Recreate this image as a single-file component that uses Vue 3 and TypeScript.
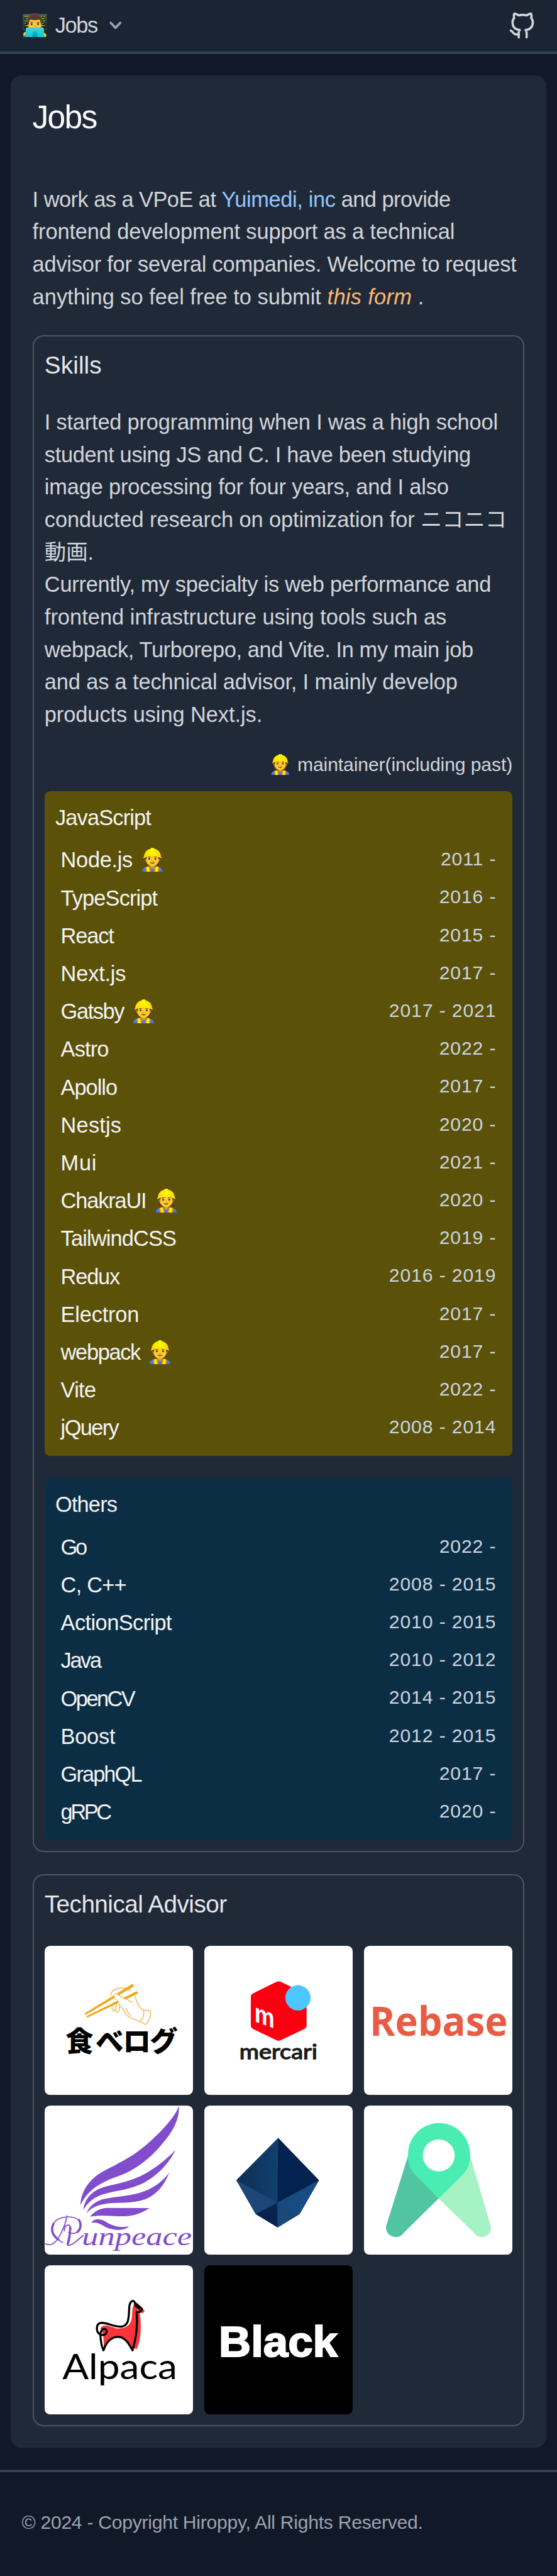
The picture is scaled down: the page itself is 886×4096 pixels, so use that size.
<script setup lang="ts">
interface Line {
  text: string
  tracking: number
}

interface Skill {
  name: string
  years: string
  tracking: number
  maintainer?: boolean
}

interface SkillGroup {
  title: string
  kind: 'javascript' | 'others'
  skills: Skill[]
}

const biography: Line[] = [
  { text: 'I started programming when I was a high school', tracking: -0.0058 },
  { text: 'student using JS and C. I have been studying', tracking: -0.0093 },
  { text: 'image processing for four years, and I also', tracking: -0.0047 },
  { text: 'conducted research on optimization for ニコニコ', tracking: -0.003 },
  { text: '動画.', tracking: 0 },
  { text: 'Currently, my specialty is web performance and', tracking: -0.0073 },
  { text: 'frontend infrastructure using tools such as', tracking: 0.0007 },
  { text: 'webpack, Turborepo, and Vite. In my main job', tracking: -0.0113 },
  { text: 'and as a technical advisor, I mainly develop', tracking: -0.0042 },
  { text: 'products using Next.js.', tracking: -0.002 },
]

const groups: SkillGroup[] = [
  {
    title: 'JavaScript',
    kind: 'javascript',
    skills: [
      { name: 'Node.js', years: '2011 -', tracking: -0.01, maintainer: true },
      { name: 'TypeScript', years: '2016 -', tracking: -0.026 },
      { name: 'React', years: '2015 -', tracking: -0.034 },
      { name: 'Next.js', years: '2017 -', tracking: -0.006 },
      { name: 'Gatsby', years: '2017 - 2021', tracking: -0.041, maintainer: true },
      { name: 'Astro', years: '2022 -', tracking: -0.025 },
      { name: 'Apollo', years: '2017 -', tracking: -0.03 },
      { name: 'Nestjs', years: '2020 -', tracking: 0.005 },
      { name: 'Mui', years: '2021 -', tracking: 0.02 },
      { name: 'ChakraUI', years: '2020 -', tracking: -0.034, maintainer: true },
      { name: 'TailwindCSS', years: '2019 -', tracking: -0.025 },
      { name: 'Redux', years: '2016 - 2019', tracking: -0.035 },
      { name: 'Electron', years: '2017 -', tracking: -0.006 },
      { name: 'webpack', years: '2017 -', tracking: -0.039, maintainer: true },
      { name: 'Vite', years: '2022 -', tracking: -0.021 },
      { name: 'jQuery', years: '2008 - 2014', tracking: -0.047 },
    ],
  },
  {
    title: 'Others',
    kind: 'others',
    skills: [
      { name: 'Go', years: '2022 -', tracking: -0.1 },
      { name: 'C, C++', years: '2008 - 2015', tracking: -0.023 },
      { name: 'ActionScript', years: '2010 - 2015', tracking: -0.017 },
      { name: 'Java', years: '2010 - 2012', tracking: -0.07 },
      { name: 'OpenCV', years: '2014 - 2015', tracking: -0.074 },
      { name: 'Boost', years: '2012 - 2015', tracking: -0.008 },
      { name: 'GraphQL', years: '2017 -', tracking: -0.056 },
      { name: 'gRPC', years: '2020 -', tracking: -0.1 },
    ],
  },
]

const track = (value: number) => ({ letterSpacing: `${value}em` })
</script>

<template>
  <div class="page">
    <header class="header">
      <div class="menu">
        <span class="menu-emoji">👨‍💻</span>
        <span class="menu-label">Jobs</span>
        <svg class="chevron" viewBox="0 0 10 7" fill="none">
          <path d="M1.5 1.5 5 5.2 8.5 1.5" stroke="#9ca3af" stroke-width="1.7" stroke-linecap="round" stroke-linejoin="round" />
        </svg>
      </div>
      <svg class="github" viewBox="0 0 24 24" fill="none" stroke="#d1d5db" stroke-width="2" stroke-linecap="round" stroke-linejoin="round">
        <path d="M9 19c-5 1.5-5-2.5-7-3m14 6v-3.87a3.37 3.37 0 0 0-.94-2.61c3.14-.35 6.44-1.54 6.44-7A5.44 5.44 0 0 0 20 4.77 5.07 5.07 0 0 0 19.91 1S18.73.65 16 2.48a13.38 13.38 0 0 0-7 0C6.27.65 5.09 1 5.09 1A5.07 5.07 0 0 0 5 4.77a5.44 5.44 0 0 0-1.5 3.78c0 5.42 3.3 6.61 6.44 7A3.37 3.37 0 0 0 9 18.13V22" />
      </svg>
    </header>

    <main class="card">
      <h1 class="title">Jobs</h1>
      <p class="intro">
        <span class="line" :style="track(-0.0155)">I work as a VPoE at <a class="company">Yuimedi, inc</a> and provide</span>
        <span class="line" :style="track(-0.0035)">frontend development support as a technical</span>
        <span class="line" :style="track(-0.0067)">advisor for several companies. Welcome to request</span>
        <span class="line" :style="track(0.0005)">anything so feel free to submit <a class="form-link">this form</a> .</span>
      </p>

      <section class="panel">
        <h2 class="panel-title">Skills</h2>
        <p class="biography">
          <span v-for="line in biography" :key="line.text" class="line" :style="track(line.tracking)">{{ line.text }}</span>
        </p>
        <p class="legend"><span class="legend-emoji">👷</span> maintainer(including past)</p>

        <div class="groups">
          <div v-for="group in groups" :key="group.title" class="group" :class="group.kind">
            <h3 class="group-title">{{ group.title }}</h3>
            <ul class="skills">
              <li v-for="skill in group.skills" :key="skill.name" class="skill">
                <span class="skill-name">
                  <span :style="track(skill.tracking)">{{ skill.name }}</span>
                  <span v-if="skill.maintainer" class="badge">👷</span>
                </span>
                <span class="years">{{ skill.years }}</span>
              </li>
            </ul>
          </div>
        </div>
      </section>

      <section class="panel">
        <h2 class="panel-title advisor-title">Technical Advisor</h2>
        <div class="companies">
          <!-- Tabelog -->
          <svg class="tile" viewBox="81 473 865 865">
            <g fill="none" stroke="#e9ae3c" stroke-width="4.5" stroke-linejoin="round" stroke-linecap="round">
              <path d="M464 760C470 728 505 714 545 718L580 734M606 764C615 800 634 842 657 846L697 852C700 880 687 916 667 930L628 910C600 898 573 894 556 874C537 842 530 824 510 812M657 846C662 874 650 900 638 912M580 878C560 858 553 830 540 810" />
              <path d="M486 800C466 826 471 850 483 851C494 852 493 828 500 808M500 808C488 846 495 859 504 858C516 855 516 835 518 820M545 773L573 793Q585 802 592 795" />
            </g>
            <path d="M592 693 602 708 319 875 313 866ZM617 736 625 750 329 891 323 882Z" fill="#efa91b" />
            <path d="M482 760C487 748 498 750 512 760L572 794 552 835 505 793Z" fill="#fff" />
            <path d="M482 760C487 748 498 750 512 760L550 783M482 760Q485 780 508 796" fill="none" stroke="#e9ae3c" stroke-width="4" />
            <text class="tabelog" x="203 378 536 692" y="1087">食べログ</text>
          </svg>

          <!-- Mercari -->
          <svg class="tile" viewBox="0 0 288 288">
            <path d="M139.500 69.800Q143.800 67.500 148 69.800L193.500 92Q198 94.500 198 99V154Q198 158.500 193.500 161L148 182.500Q143.800 185 139.500 182.500L94.500 161Q90 158.500 90 154V99Q90 94.500 94.500 92Z" fill="#fb0010" />
            <circle cx="181.300" cy="100.600" r="24.400" fill="#4dc7ff" />
            <g transform="translate(97 146) skewY(20)">
              <text class="mercari-mark" x="0" y="0" textLength="39" lengthAdjust="spacingAndGlyphs">m</text>
            </g>
            <text class="mercari" x="68" y="218.500" textLength="151" lengthAdjust="spacingAndGlyphs">mercari</text>
          </svg>

          <!-- Rebase -->
          <svg class="tile" viewBox="0 0 288 288">
            <text class="rebase" x="11" y="174" textLength="267" lengthAdjust="spacingAndGlyphs">Rebase</text>
          </svg>

          <!-- Runpeace -->
          <svg class="tile" viewBox="21 22 865 865">
            <g fill="#824dcd">
              <path d="M801 22C808 110 755 190 690 262C630 330 560 385 480 420C390 455 290 480 229 600C233 520 280 450 360 405C450 358 520 325 590 268C690 185 785 85 801 22Z" />
              <path d="M782 280C755 340 690 420 600 470C520 512 440 515 370 535C310 553 275 580 246 629C254 560 300 520 350 501C410 480 480 475 560 440C640 405 725 340 782 280Z" />
              <path d="M746 410C725 465 690 525 620 560C540 595 450 582 380 592C325 600 290 615 264 650C280 605 320 575 370 564C440 549 520 550 600 520C660 497 710 460 746 410Z" />
              <path d="M284 668C310 640 335 618 390 617L631 618C595 640 550 664 490 665C420 667 345 654 284 668Z" />
              <path d="M293 704C310 675 345 680 375 696C415 721 450 734 512 725C485 750 430 750 385 732C350 716 330 694 293 704Z" />
            </g>
            <g fill="none" stroke="#824dcd" stroke-linecap="round">
              <path d="M26 825C60 842 90 815 112 772C130 735 148 700 150 662M126 818C65 785 45 740 80 697C115 660 215 655 230 710C236 760 185 775 160 758" stroke-width="6" />
              <path d="M136 750C130 715 175 700 172 740C168 780 150 810 155 834C190 835 205 805 245 778" stroke-width="7" />
              <path d="M72 710C54 745 70 780 100 800M222 688C236 715 230 742 212 756M170 730Q168 790 156 825" stroke-width="13" />
            </g>
            <text class="runpeace" x="238" y="832" textLength="638" lengthAdjust="spacingAndGlyphs">unpeace</text>
          </svg>

          <!-- Crystal -->
          <svg class="tile" viewBox="0 0 288 288">
            <defs>
              <linearGradient id="crystal-left" x1="0" y1="0" x2="1" y2="0">
                <stop offset="0" stop-color="#0d2f50" />
                <stop offset="1" stop-color="#123f71" />
              </linearGradient>
            </defs>
            <path d="M143 62.700 62 144.400 99.400 210 142 235.700 184.500 210 222 144.400Z" fill="#19457a" />
            <path d="M143 62.700 62 144.400 141.500 188Z" fill="url(#crystal-left)" />
            <path d="M143 62.700 222 144.400 141.500 188Z" fill="#04224f" />
            <path d="M62 144.400 99.400 210 141.500 188Z" fill="#1c4776" />
            <path d="M222 144.400 184.500 210 141.500 188Z" fill="#194b83" />
            <path d="M99.400 210 142 235.700 141.500 188Z" fill="#07244f" />
            <path d="M184.500 210 142 235.700 141.500 188Z" fill="#1a4877" />
          </svg>

          <!-- Map pin -->
          <svg class="tile" viewBox="0 0 288 288">
            <path d="M85 98 43.200 232C38 252 66 263 77 246L144.400 179.700Z" fill="#51c5a2" />
            <path d="M205.600 98 245 232C250 252 224 263 213 246L144.400 179.700Z" fill="#a5f2c5" />
            <path d="M145.300 33.700C112 33.700 85 61 85 96C85 112 90 124 99 134L144.400 179.700 191 134C200 124 205.600 112 205.600 96C205.600 61 178.600 33.700 145.300 33.700Z" fill="#49edb4" />
            <circle cx="144.700" cy="96.400" r="30.900" fill="#fff" />
          </svg>

          <!-- Alpaca -->
          <svg class="tile" viewBox="21 21 865 865">
            <path d="M345 388C360 360 390 372 440 388C500 390 525 365 528 320L532 270Q540 240 557 236L577 258 601 283Q604 300 574 298C585 370 582 450 557 508L530 500C510 455 470 435 440 438C400 445 380 480 366 500L362 425Z" fill="#fd333c" />
            <path d="M544 235C535 218 515 232 513 265C509 320 514 370 470 377C420 382 385 350 345 356C315 366 320 415 348 424C375 434 393 405 375 392C350 382 342 425 345 425C347 460 350 490 363 515C375 480 400 438 447 436C490 438 510 475 532 515C555 440 563 370 556 292C570 296 590 285 585 272C570 260 558 248 547 245Z" fill="none" stroke="#000" stroke-width="12" stroke-linejoin="round" />
            <path d="M545 246 586 268 570 280Q555 268 541 258Z" fill="#000" />
            <text class="alpaca" x="124" y="684" textLength="668" lengthAdjust="spacingAndGlyphs">Alpaca</text>
          </svg>

          <!-- Black -->
          <svg class="tile dark" viewBox="0 0 288 288">
            <text class="black" x="28" y="176" textLength="230" lengthAdjust="spacingAndGlyphs">Black</text>
          </svg>
        </div>
      </section>
    </main>

    <footer class="footer">© 2024 - Copyright Hiroppy, All Rights Reserved.</footer>
  </div>
</template>

<style>
html {
  font-size: 21.5049px;
  background: #111827;
}
</style>

<style scoped>
.page {
  box-sizing: border-box;
  height: 4096px;
  overflow: hidden;
  background: #111827;
  color: #d1d5db;
  font-family: 'Liberation Sans', 'Noto Sans CJK JP', 'Noto Color Emoji', sans-serif;
  font-size: 1.6rem;
  line-height: 2.4rem;
}

h1,
h2,
h3,
p,
ul {
  margin: 0;
  padding: 0;
  font-weight: 400;
  list-style: none;
}

.header {
  box-sizing: border-box;
  display: flex;
  align-items: center;
  justify-content: space-between;
  height: 4rem;
  padding: 0 1.6rem;
  border-bottom: 0.2rem solid #334155;
  background: #1b2432;
}

.menu {
  display: flex;
  align-items: center;
}

.menu-emoji {
  width: 2.48rem;
  white-space: nowrap;
}

.menu-label {
  width: 3.98rem;
  letter-spacing: -0.04em;
}

.chevron {
  width: 1rem;
  height: 0.7rem;
}

.github {
  width: 2rem;
  height: 2rem;
}

.card {
  margin: 1.6rem 0.8rem;
  padding: 1.6rem;
  border-radius: 0.8rem;
  background: #202937;
}

.title {
  margin-bottom: 3.47rem;
  color: #f9fafb;
  font-size: 2.4rem;
  line-height: 2.9rem;
  letter-spacing: -0.035em;
}

.line {
  display: block;
  height: 2.4rem;
  white-space: pre;
}

.company {
  color: #93c5fd;
  letter-spacing: -0.0105em;
}

.form-link {
  color: #fdba74;
  font-style: italic;
  letter-spacing: 0.009em;
}

.panel {
  margin-top: 1.6rem;
  padding: 0.75rem 0.8rem 0.8rem;
  border: 0.1rem solid #4b5563;
  border-radius: 0.8rem;
}

.panel-title {
  color: #e5e7eb;
  font-size: 1.8rem;
  line-height: 2.8rem;
  letter-spacing: 0.003em;
}

.advisor-title {
  letter-spacing: -0.014em;
}

.biography {
  margin-top: 1.64rem;
}

.legend {
  margin-top: 1.46rem;
  font-size: 1.4rem;
  line-height: 2rem;
  text-align: right;
  letter-spacing: -0.003em;
}

.groups {
  display: flex;
  flex-direction: column;
  gap: 1.63rem;
  margin-top: 0.98rem;
}

.group {
  padding: 0.78rem 0.8rem 0.65rem;
  border-radius: 0.4rem;
  color: #f3f4f6;
}

.javascript {
  background: #5b5108;
}

.others {
  background: #0c2e44;
}

.group-title {
  margin-bottom: 0.55rem;
  font-size: 1.6rem;
  letter-spacing: -0.025em;
}

.skill {
  display: flex;
  align-items: center;
  justify-content: space-between;
  height: 2.8rem;
  padding: 0 0.4rem;
}

.skill-name {
  display: flex;
  gap: 0.5rem;
}

.years {
  position: relative;
  top: -0.1rem;
  color: #cbd5e1;
  font-size: 1.4rem;
  letter-spacing: 0.03em;
}

.companies {
  display: grid;
  grid-template-columns: repeat(3, 1fr);
  gap: 0.8rem;
  margin-top: 1.69rem;
}

.tile {
  display: block;
  width: 100%;
  aspect-ratio: 1;
  border-radius: 0.4rem;
  background: #fff;
}

.dark {
  background: #000;
}

.tabelog {
  font: 900 162px 'Noto Sans CJK JP', sans-serif;
}

.mercari-mark {
  fill: #fff;
  font: 700 52px 'Liberation Sans', sans-serif;
}

.mercari {
  fill: #1c1c1c;
  font: 400 40px Lato, sans-serif;
  stroke: #1c1c1c;
  stroke-width: 1.6;
}

.rebase {
  fill: #e75c45;
  font: 700 79px 'Open Sans', sans-serif;
}

.runpeace {
  fill: #824dcd;
  font: italic 400 155px 'Liberation Serif', serif;
}

.alpaca {
  font: 400 208px Lato, sans-serif;
}

.black {
  fill: #fff;
  font: 700 84px 'Liberation Sans', sans-serif;
  stroke: #fff;
  stroke-width: 2.5;
}

.footer {
  padding: 2.71rem 1.6rem;
  border-top: 0.2rem solid #334155;
  color: #9ca3af;
  font-size: 1.4rem;
  line-height: 2rem;
  letter-spacing: -0.0086em;
}
</style>
